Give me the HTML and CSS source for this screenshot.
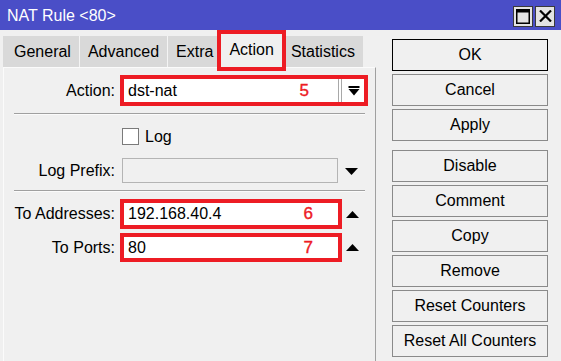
FILE: index.html
```html
<!DOCTYPE html>
<html lang="en">
<head>
  <meta charset="UTF-8" />
  <title>NAT Rule &lt;80&gt;</title>
  <link rel="stylesheet" href="styles.css">
</head>
<body>

<div class="window">
  <header class="titlebar">
    <span class="title">NAT Rule &lt;80&gt;</span>
    <div class="win-btns">
      <span class="win-btn">
        <svg width="14" height="15" viewBox="0 0 14 15"><rect x="0.75" y="0.75" width="12.5" height="13.5" fill="none" stroke="#000" stroke-width="1.5"/><rect x="0" y="0" width="14" height="3.5" fill="#000"/></svg>
      </span>
      <span class="win-btn">
        <svg width="13" height="12" viewBox="0 0 13 12"><path d="M1 0.5 L12 11.5 M12 0.5 L1 11.5" stroke="#000" stroke-width="2.2"/></svg>
      </span>
    </div>
  </header>

  <div class="main">
    <!-- tabs + form -->
    <div class="left">
      <div class="tabs">
        <span class="tab">General</span>
        <span class="tab">Advanced</span>
        <span class="tab">Extra</span>
        <span class="tab active">Action</span>
        <span class="tab">Statistics</span>
      </div>

      <div class="panel">
        <div class="row row-action">
          <span class="lbl">Action:</span>
          <div class="mark mark-wide">
            <span class="val">dst-nat</span>
            <span class="num">5</span>
            <span class="drop">
              <svg width="12" height="10" viewBox="0 0 12 10"><rect x="0.5" y="0" width="11" height="2" fill="#000"/><polygon points="0.5,3 11.5,3 6,9.5" fill="#000"/></svg>
            </span>
          </div>
        </div>

        <div class="sep"></div>

        <div class="row row-log">
          <span class="lbl"></span>
          <span class="check"></span>
          <span class="check-text">Log</span>
        </div>

        <div class="row row-prefix">
          <span class="lbl">Log Prefix:</span>
          <span class="field-off"></span>
          <svg class="tri tri-prefix" width="13" height="7" viewBox="0 0 13 7"><polygon points="0,0 13,0 6.5,7" fill="#000"/></svg>
        </div>

        <div class="sep"></div>

        <div class="row row-addr">
          <span class="lbl">To Addresses:</span>
          <div class="mark">
            <span class="val">192.168.40.4</span>
            <span class="num">6</span>
          </div>
          <svg class="tri" width="13" height="7" viewBox="0 0 13 7"><polygon points="0,7 13,7 6.5,0" fill="#000"/></svg>
        </div>

        <div class="row row-ports">
          <span class="lbl">To Ports:</span>
          <div class="mark">
            <span class="val">80</span>
            <span class="num">7</span>
          </div>
          <svg class="tri" width="13" height="7" viewBox="0 0 13 7"><polygon points="0,7 13,7 6.5,0" fill="#000"/></svg>
        </div>
      </div>
    </div>

    <!-- side buttons -->
    <div class="side">
      <div class="btn-group">
        <button class="btn btn-default">OK</button>
        <button class="btn">Cancel</button>
        <button class="btn">Apply</button>
      </div>
      <div class="btn-group">
        <button class="btn">Disable</button>
        <button class="btn">Comment</button>
        <button class="btn">Copy</button>
        <button class="btn">Remove</button>
        <button class="btn">Reset Counters</button>
        <button class="btn">Reset All Counters</button>
      </div>
    </div>
  </div>
</div>

</body>
</html>
```

FILE: styles.css
```css
* {
  box-sizing: border-box;
}
body {
  margin: 0;
  font-family: "Liberation Sans", Arial, sans-serif;
  font-size: 16px;
  color: #000;
  background: #f0f0f0;
}
.window {
  width: 561px;
  height: 361px;
  display: flex;
  flex-direction: column;
  background: #f0f0f0;
  overflow: hidden;
}
.titlebar {
  height: 30px;
  flex-shrink: 0;
  background: #4a4ec7;
  color: white;
  display: flex;
  align-items: center;
  justify-content: space-between;
  padding: 1px 6px 0 7px;
}
.win-btns {
  display: flex;
  gap: 2px;
  margin-top: 1px;
}
.win-btn {
  width: 20px;
  height: 21px;
  background: #e3e3e3;
  border: 1px solid #3a3a3a;
  display: flex;
  align-items: center;
  justify-content: center;
}
.main {
  flex: 1;
  display: flex;
}
.left {
  width: 376px;
  padding-left: 3px;
  display: flex;
  flex-direction: column;
}
.tabs {
  height: 41px;
  display: flex;
  align-items: flex-end;
  margin-bottom: -4px;
}
.tab {
  height: 31px;
  margin-bottom: 4px;
  padding: 0 8px;
  background: #d9d9d9;
  border-left: 1px solid #f4f4f4;
  display: flex;
  align-items: center;
  white-space: nowrap;
}
.tab:first-child {
  padding-left: 11px;
  border-left: none;
}
.tab.active {
  position: relative;
  z-index: 1;
  height: 41px;
  margin: 0 -4px;
  padding: 0 8px 1px 8px;
  border: 4px solid #ed1c24;
  background: #f0f0f0;
}
.panel {
  flex: 1;
  background: #f0f0f0;
  border-top: 1px solid #fbfbfb;
  border-left: 1px solid #fbfbfb;
  border-right: 1px solid #a0a0a0;
  display: flex;
  flex-direction: column;
}
.row {
  display: flex;
  align-items: center;
}
.lbl {
  width: 111px;
  flex-shrink: 0;
  text-align: right;
}
.row-action {
  height: 31px;
  margin-top: 7px;
}
.row-log {
  height: 17px;
  margin-top: 13px;
}
.row-prefix {
  height: 25px;
  margin-top: 13px;
}
.row-addr {
  height: 30px;
  margin-top: 7px;
}
.row-ports {
  height: 29px;
  margin-top: 4px;
}
.sep {
  margin: 7px 10px 0 10px;
  border-top: 1px solid #a0a0a0;
  border-bottom: 1px solid #fbfbfb;
}
.mark {
  margin-left: 5px;
  width: 222px;
  height: 100%;
  border: 4px solid #ed1c24;
  background: white;
  display: flex;
  align-items: center;
}
.mark-wide {
  width: 248px;
}
.val {
  padding-left: 4px;
}
.num {
  margin-left: auto;
  margin-right: 25px;
  color: #ed1c24;
  font-size: 17px;
  -webkit-text-stroke: 0.4px #ed1c24;
}
.mark-wide .num {
  margin-right: 29px;
}
.drop {
  width: 26px;
  height: 100%;
  border-left: 4px double #a8a8a8;
  display: flex;
  align-items: center;
  justify-content: center;
  padding-left: 1px;
}
.check {
  margin-left: 7px;
  width: 17px;
  height: 17px;
  background: white;
  border: 1px solid #7a7a7a;
}
.check-text {
  margin-left: 6px;
}
.field-off {
  margin-left: 7px;
  width: 216px;
  height: 100%;
  border: 1px solid #b4b4b4;
  background: #f0f0f0;
}
.tri {
  margin-left: 4px;
}
.tri-prefix {
  margin-left: 7px;
  margin-top: 2px;
}
.side {
  flex: 1;
  padding: 9px 13px 0 16px;
  display: flex;
  flex-direction: column;
  gap: 9px;
}
.btn-group {
  display: flex;
  flex-direction: column;
  gap: 3px;
}
.btn {
  width: 156px;
  height: 32px;
  padding: 0;
  font: inherit;
  color: #000;
  background: #f0f0f0;
  border: 1px solid #8a8a8a;
  border-radius: 0;
}
.btn-default {
  border-color: #000;
}
```
